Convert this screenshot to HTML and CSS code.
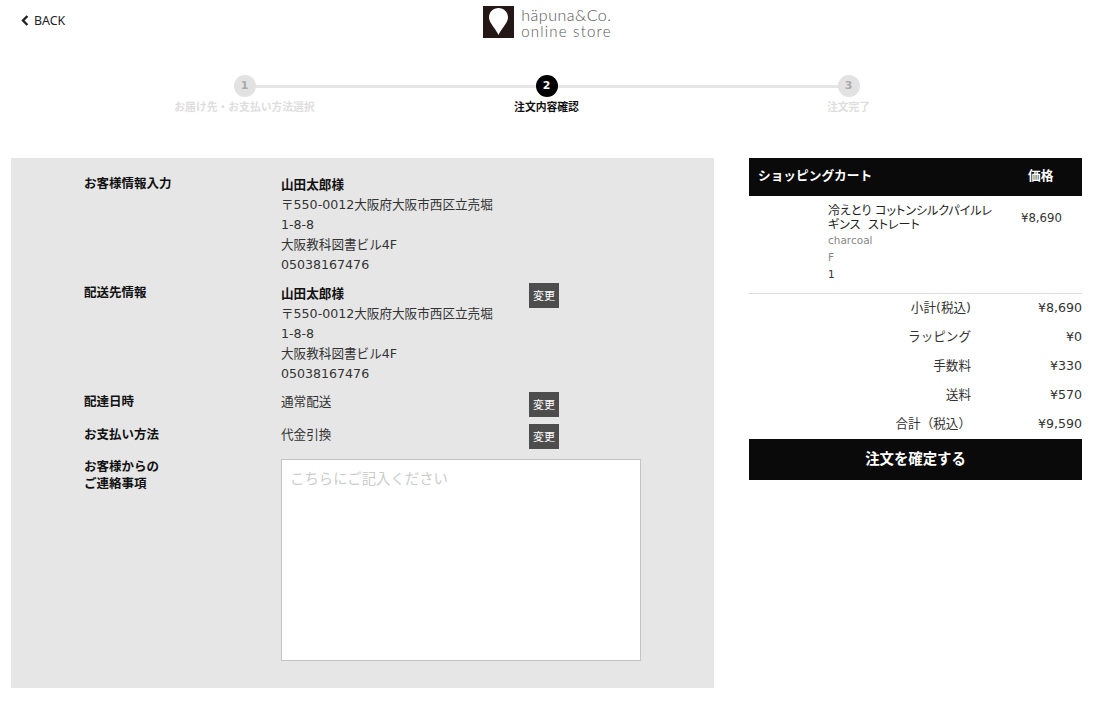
FILE: index.html
```html
<!DOCTYPE html>
<html lang="ja">
<head>
  <meta charset="UTF-8">
  <title>注文内容確認</title>
  <link rel="stylesheet" href="styles.css">
</head>
<body>
  <header class="header">
    <a class="back" href="#">
      <svg class="back-icon" width="8" height="11" viewBox="0 0 8 11"><path d="M6.4 1 2 5.500l4.400 4.500" fill="none" stroke="#222" stroke-width="2.400"/></svg>
      BACK
    </a>
    <div class="logo">
      <svg class="logo-mark" width="31" height="32" viewBox="0 0 31 32">
        <rect width="31" height="32" fill="#231815"/>
        <path d="M15.500 29C13 23 6 17 6 11.500 6 6 10.200 2 15.500 2S25 6 25 11.500C25 17 18 23 15.500 29Z" fill="#fff"/>
      </svg>
      <div class="logo-text">
        <div>häpuna&amp;Co.</div>
        <div class="logo-sub">online store</div>
      </div>
    </div>
  </header>

  <div class="steps">
    <div class="step">
      <div class="step-num">1</div>
      <div class="step-label">お届け先・お支払い方法選択</div>
    </div>
    <div class="step current">
      <div class="step-num">2</div>
      <div class="step-label">注文内容確認</div>
    </div>
    <div class="step">
      <div class="step-num">3</div>
      <div class="step-label">注文完了</div>
    </div>
  </div>

  <main class="content">
    <section class="panel">
      <div class="row row-address">
        <div class="row-label">お客様情報入力</div>
        <div class="row-value">
          <div class="name">山田太郎様</div>
          <div>〒550-0012大阪府大阪市西区立売堀</div>
          <div>1-8-8</div>
          <div>大阪教科図書ビル4F</div>
          <div>05038167476</div>
        </div>
      </div>
      <div class="row row-address">
        <div class="row-label">配送先情報</div>
        <div class="row-value">
          <div class="name">山田太郎様</div>
          <div>〒550-0012大阪府大阪市西区立売堀</div>
          <div>1-8-8</div>
          <div>大阪教科図書ビル4F</div>
          <div>05038167476</div>
        </div>
        <button class="change">変更</button>
      </div>
      <div class="row row-short">
        <div class="row-label">配達日時</div>
        <div class="row-value">通常配送</div>
        <button class="change">変更</button>
      </div>
      <div class="row row-short row-pay">
        <div class="row-label">お支払い方法</div>
        <div class="row-value">代金引換</div>
        <button class="change">変更</button>
      </div>
      <div class="row row-note">
        <div class="row-label">お客様からの<br>ご連絡事項</div>
        <textarea class="note" placeholder="こちらにご記入ください"></textarea>
      </div>
    </section>

    <aside class="cart">
      <div class="cart-head">
        <div class="cart-title">ショッピングカート</div>
        <div class="cart-price-title">価格</div>
      </div>
      <div class="item">
        <div class="item-info">
          <div class="item-name">冷えとり コットンシルクパイルレギンス&nbsp;&nbsp;ストレート</div>
          <div class="item-sub">charcoal</div>
          <div class="item-sub">F</div>
          <div class="item-sub item-qty">1</div>
        </div>
        <div class="item-price">¥8,690</div>
      </div>
      <div class="sum">
        <div class="sum-label">小計(税込)</div>
        <div class="sum-value">¥8,690</div>
      </div>
      <div class="sum">
        <div class="sum-label">ラッピング</div>
        <div class="sum-value">¥0</div>
      </div>
      <div class="sum">
        <div class="sum-label">手数料</div>
        <div class="sum-value">¥330</div>
      </div>
      <div class="sum">
        <div class="sum-label">送料</div>
        <div class="sum-value">¥570</div>
      </div>
      <div class="sum">
        <div class="sum-label">合計（税込）</div>
        <div class="sum-value">¥9,590</div>
      </div>
      <button class="confirm">注文を確定する</button>
    </aside>
  </main>
</body>
</html>
```

FILE: styles.css
```css
body {
  margin: 0;
  background: #fff;
  color: #333;
  font-family: "DejaVu Sans", "Noto Sans CJK JP", sans-serif;
  font-size: 12.6px;
}

.header {
  display: grid;
  grid-template-columns: 1fr auto 1fr;
  height: 75px;
  padding-top: 6px;
  box-sizing: border-box;
}

.back {
  display: flex;
  align-items: center;
  gap: 5px;
  height: 28px;
  margin-left: 21px;
  color: #222;
  font-family: "Noto Sans", "DejaVu Sans", sans-serif;
  font-size: 12.4px;
  text-decoration: none;
}

.logo {
  display: flex;
  gap: 7px;
  margin-left: -1px;
  align-self: start;
}

.logo-text {
  color: #555;
  font-family: Lato, sans-serif;
  font-weight: 300;
  font-size: 16px;
  line-height: 17px;
  letter-spacing: 0.5px;
}

.logo-sub {
  font-size: 15px;
  letter-spacing: 1.2px;
}

.steps {
  position: relative;
  display: flex;
  width: 906px;
  margin-left: 93.5px;
  height: 83px;
}

.steps::before {
  content: "";
  position: absolute;
  left: 151px;
  right: 151px;
  top: 10px;
  height: 3px;
  background: #e6e6e6;
}

.step {
  position: relative;
  flex: 1;
  display: flex;
  flex-direction: column;
  align-items: center;
  color: #dedede;
  font-size: 10.8px;
  font-weight: bold;
}

.step-num {
  width: 22px;
  height: 22px;
  border-radius: 50%;
  background: #e2e2e2;
  color: #aaa;
  font-size: 11px;
  line-height: 21px;
  text-align: center;
}

.step-label {
  margin-top: 2px;
  line-height: 17px;
}

.current {
  color: #111;
}

.current .step-num {
  background: #000;
  color: #fff;
}

.content {
  display: flex;
  gap: 35px;
  padding: 0 14px 0 11px;
}

.panel {
  width: 703px;
  height: 530px;
  padding: 16px 0 0 73px;
  box-sizing: border-box;
  background: #e6e6e6;
}

.row {
  display: flex;
}

.row-address {
  height: 100px;
  margin-bottom: 9px;
}

.row-short {
  height: 25px;
  margin-bottom: 7px;
  line-height: 20px;
}

.row-address .row-label,
.row-address .row-value,
.row-short .row-label {
  padding-top: 1px;
}

.row-pay .row-label {
  padding-top: 2px;
}

.row-pay .row-value {
  padding-top: 1px;
}

.row-note {
  margin-top: 10px;
}

.row-note .row-label {
  margin-top: -1px;
}

.row-label {
  width: 197px;
  flex-shrink: 0;
  color: #111;
  font-size: 12.5px;
  font-weight: bold;
  line-height: 17px;
}

.row-value {
  width: 248px;
  flex-shrink: 0;
  line-height: 20px;
}

.name {
  color: #111;
  font-weight: bold;
}

.change {
  width: 30px;
  height: 25px;
  padding: 0 0 2px;
  border: none;
  background: #4d4d4d;
  color: #fff;
  font-family: inherit;
  font-size: 11px;
}

.note {
  width: 360px;
  height: 202px;
  margin: 0;
  padding: 7px 8px;
  box-sizing: border-box;
  border: 1px solid #c4c4c4;
  background: #fff;
  font-family: inherit;
  font-size: 14.4px;
  resize: none;
}

.note::placeholder {
  color: #ccc;
}

.cart {
  width: 333px;
}

.cart-head {
  display: flex;
  align-items: center;
  height: 38px;
  padding-bottom: 5px;
  box-sizing: border-box;
  background: #0a0a0a;
  color: #fff;
  font-size: 12.7px;
  font-weight: bold;
}

.cart-title {
  width: 279px;
  padding-left: 9px;
  box-sizing: border-box;
}

.item {
  display: flex;
  height: 98px;
  padding: 8px 0 0 79px;
  box-sizing: border-box;
  border-bottom: 1px solid #ddd;
}

.item-info {
  width: 170px;
  flex-shrink: 0;
}

.item-name {
  color: #222;
  font-size: 12px;
  line-height: 14px;
  font-feature-settings: "palt";
}

.item-sub {
  color: #888;
  font-size: 10.5px;
  line-height: 17px;
}

.item-qty {
  color: #333;
}

.item-price {
  margin: 6px 0 0 23px;
  font-size: 11.7px;
  line-height: 16px;
}

.sum {
  display: flex;
  justify-content: flex-end;
  height: 29px;
  line-height: 28px;
}

.sum-label {
  width: 222px;
  text-align: right;
}

.sum-value {
  width: 111px;
  flex-shrink: 0;
  text-align: right;
}

.confirm {
  display: block;
  width: 333px;
  height: 41px;
  padding: 0 0 5px;
  border: none;
  background: #0a0a0a;
  color: #fff;
  font-family: inherit;
  font-size: 14.4px;
  font-weight: bold;
}
```
